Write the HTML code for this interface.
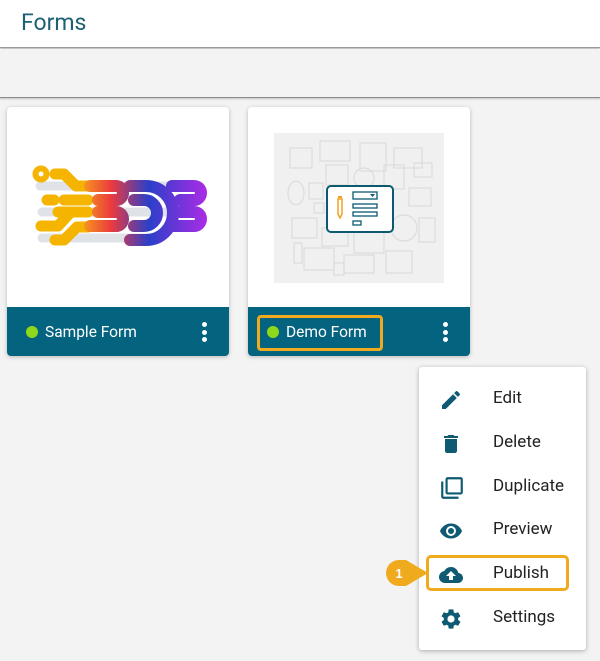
<!DOCTYPE html>
<html><head><meta charset="utf-8"><style>
*{margin:0;padding:0;box-sizing:border-box}
body{width:600px;height:661px;background:#f3f3f3;font-family:Roboto,"Liberation Sans",sans-serif;position:relative;overflow:hidden}
.hdr{position:absolute;left:0;top:0;width:600px;height:48px;background:#fff;border-bottom:1px solid #9a9a9a;box-shadow:0 1px 2px rgba(0,0,0,.25)}
.hdr span{position:absolute;left:21px;top:9px;font-size:23px;color:#1d5f73}
.band{position:absolute;left:0;top:49px;width:600px;height:49px;background:#f3f3f3;border-bottom:1px solid #8a8a8a;box-shadow:0 1px 2px rgba(0,0,0,.2)}
.card{position:absolute;top:107px;width:222px;height:249px;background:#fff;border-radius:4px;box-shadow:0 1px 4px rgba(0,0,0,.25);overflow:hidden}
.foot{position:absolute;left:0;bottom:0;width:100%;height:49px;background:#04637f;color:#fff;font-size:15.5px}
.dot{position:absolute;left:19px;top:19px;width:12px;height:12px;border-radius:50%;background:#8ed81c}
.lbl{position:absolute;left:38px;top:16px}
.kb{position:absolute;right:22px;top:15px;width:5px}
.kb i{display:block;width:5px;height:5px;border-radius:50%;background:#fff;margin-bottom:2.5px}
.menu{position:absolute;left:419px;top:367px;width:167px;height:283px;background:#fff;border-radius:3px;box-shadow:0 1px 5px rgba(0,0,0,.3)}
.it{position:absolute;left:74px;font-size:17px;color:#222}
.ic{position:absolute;left:20px}
</style></head><body>
<div class="hdr"><span>Forms</span></div>
<div class="band"></div>

<div class="card" style="left:7px">
<svg style="position:absolute;left:0;top:0" width="222" height="200" viewBox="7 107 222 200">
<defs><linearGradient id="g" x1="80" y1="0" x2="205" y2="0" gradientUnits="userSpaceOnUse">
<stop offset="0" stop-color="#f7a21a"/><stop offset=".25" stop-color="#ec3a3f"/><stop offset=".55" stop-color="#2b3fc9"/><stop offset="1" stop-color="#a72ce6"/></linearGradient></defs>
<g stroke="#dfe3e8" stroke-width="9" stroke-linecap="round">
<line x1="40" y1="186" x2="200" y2="186"/><line x1="42" y1="212" x2="200" y2="212"/><line x1="42" y1="238" x2="150" y2="238"/></g>
<g stroke="#f5b400" stroke-width="11" stroke-linecap="round" stroke-linejoin="round" fill="none">
<circle cx="41" cy="174" r="3"/><path d="M55 174 H64 L76 186 H88"/><path d="M47 200 H54"/><path d="M64 200 H88"/>
<path d="M58 212 H88"/><path d="M41 226 H58 L70 213"/><path d="M55 240 H64 L77 227 H88"/></g>
<g stroke="url(#g)" stroke-width="12" stroke-linecap="round" fill="none">
<path d="M90 186 H116 a7 7 0 0 1 0 14 H98"/><path d="M98 212 H116 a7 7 0 0 1 0 14 H90"/>
<path d="M130 186 H146 a27 27 0 0 1 0 54 H130"/><path d="M134 200 H144 a13 13 0 0 1 0 26 H134"/>
<path d="M172 186 H194 a7 7 0 0 1 0 14 H180"/><path d="M180 212 H194 a7 7 0 0 1 0 14 H172"/></g>
</svg>
<div class="foot"><div class="dot"></div><div class="lbl">Sample Form</div><div class="kb"><i></i><i></i><i></i></div></div>
</div>

<div class="card" style="left:248px">
<svg style="position:absolute;left:26px;top:26px" width="170" height="150" viewBox="0 0 170 150">
<rect width="170" height="150" fill="#f0f0f0"/>
<g fill="none" stroke="#dcdcdc" stroke-width="1.2">
<rect x="16" y="15" width="22" height="20"/><rect x="46" y="8" width="30" height="20"/><rect x="86" y="10" width="26" height="28"/><rect x="120" y="15" width="28" height="20"/>
<circle cx="90" cy="45" r="10"/><rect x="52" y="32" width="22" height="20"/><rect x="110" y="32" width="20" height="24"/><ellipse cx="22" cy="60" rx="8" ry="12"/>
<rect x="35" y="50" width="14" height="16"/><rect x="135" y="55" width="22" height="18"/><rect x="18" y="85" width="25" height="20"/><circle cx="130" cy="95" r="13"/>
<rect x="48" y="95" width="26" height="18"/><rect x="80" y="98" width="30" height="22"/><rect x="30" y="115" width="30" height="22"/><rect x="70" y="122" width="30" height="18"/><rect x="112" y="118" width="26" height="22"/><rect x="145" y="85" width="16" height="24"/>
<rect x="40" y="70" width="10" height="10"/><rect x="140" y="30" width="18" height="14"/><rect x="20" y="110" width="8" height="20"/><rect x="100" y="70" width="8" height="12"/><rect x="60" y="130" width="10" height="12"/></g>
<rect x="53" y="53" width="66" height="46" rx="4" fill="#fff" stroke="#0c5a70" stroke-width="2"/>
<rect x="79" y="59" width="24" height="7" fill="none" stroke="#0c5a70" stroke-width="1.3"/><path d="M96 61 h5 l-2.5 3z" fill="#0c5a70"/>
<rect x="79" y="71" width="24" height="4" fill="none" stroke="#0c5a70" stroke-width="1.3"/><rect x="79" y="79" width="24" height="4" fill="none" stroke="#0c5a70" stroke-width="1.3"/>
<rect x="79" y="88" width="8" height="4" fill="none" stroke="#0c5a70" stroke-width="1.3"/>
<path d="M64 66 h4 v15 l-2 4 -2 -4z" fill="none" stroke="#f0a020" stroke-width="1.5"/><rect x="64" y="63" width="4" height="2" fill="#f0a020"/>
</svg>
<div class="foot"><div class="dot"></div><div class="lbl">Demo Form</div><div class="kb"><i></i><i></i><i></i></div>
<div style="position:absolute;left:9px;top:8px;width:126px;height:36px;border:3px solid #f0aa1e;border-radius:4px"></div></div>
</div>

<div class="menu">
<svg class="ic" style="top:21px" width="24" height="24" viewBox="0 0 24 24"><path fill="#0e5a72" d="M3 17.25V21h3.75L17.81 9.94l-3.75-3.75L3 17.25zM20.710 7.04a1 1 0 0 0 0-1.41l-2.34-2.34a1 1 0 0 0-1.41 0l-1.83 1.83 3.75 3.75 1.83-1.83z"/></svg>
<div class="it" style="top:21px">Edit</div>
<svg class="ic" style="top:65px" width="24" height="24" viewBox="0 0 24 24"><path fill="#0e5a72" d="M6 19c0 1.1.9 2 2 2h8c1.1 0 2-.9 2-2V7H6v12zM19 4h-3.5l-1-1h-5l-1 1H5v2h14V4z"/></svg>
<div class="it" style="top:65px">Delete</div>
<svg class="ic" style="top:108px" width="26" height="26" viewBox="0 0 24 24"><path fill="#0e5a72" d="M4 6H2v14c0 1.1.9 2 2 2h14v-2H4V6zm16-4H8c-1.1 0-2 .9-2 2v12c0 1.1.9 2 2 2h12c1.1 0 2-.9 2-2V4c0-1.1-.9-2-2-2zm0 14H8V4h12v12z"/></svg>
<div class="it" style="top:109px">Duplicate</div>
<svg class="ic" style="top:152px" width="24" height="24" viewBox="0 0 24 24"><path fill="#0e5a72" d="M12 4.5C7 4.5 2.730 7.61 1 12c1.73 4.39 6 7.5 11 7.5s9.27-3.11 11-7.5c-1.73-4.39-6-7.5-11-7.5zM12 17a5 5 0 1 1 0-10 5 5 0 0 1 0 10zm0-8a3 3 0 1 0 0 6 3 3 0 0 0 0-6z"/></svg>
<div class="it" style="top:152px">Preview</div>
<svg class="ic" style="top:196px" width="24" height="24" viewBox="0 0 24 24"><path fill="#0e5a72" d="M19.35 10.04A7.49 7.49 0 0 0 12 4C9.11 4 6.6 5.64 5.35 8.04A5.994 5.994 0 0 0 0 14c0 3.31 2.69 6 6 6h13c2.76 0 5-2.24 5-5 0-2.64-2.05-4.78-4.65-4.96zM14 13v4h-4v-4H7l5-5 5 5h-3z"/></svg>
<div class="it" style="top:196px">Publish</div>
<svg class="ic" style="top:240px" width="24" height="24" viewBox="0 0 24 24"><path fill="#0e5a72" d="M19.14 12.94c.04-.3.06-.61.06-.94 0-.32-.02-.64-.07-.94l2.03-1.58a.49.49 0 0 0 .12-.61l-1.92-3.32a.488.488 0 0 0-.59-.22l-2.39.96c-.5-.38-1.03-.7-1.620-.94l-.36-2.54a.484.484 0 0 0-.48-.41h-3.84c-.24 0-.43.17-.47.41l-.36 2.54c-.59.24-1.13.57-1.62.94l-2.39-.96c-.22-.08-.47 0-.59.22L2.74 8.87c-.12.21-.8.47.12.61l2.03 1.58c-.05.3-.09.63-.09.94s.02.64.07.94l-2.03 1.58a.49.49 0 0 0-.12.61l1.92 3.32c.12.22.37.29.59.22l2.39-.96c.5.38 1.03.7 1.62.94l.36 2.54c.05.24.24.41.48.41h3.84c.24 0 .44-.17.47-.41l.36-2.54c.59-.24 1.13-.56 1.62-.94l2.39.96c.22.08.47 0 .59-.22l1.92-3.32c.12-.22.07-.47-.12-.61l-2.01-1.58zM12 15.6A3.6 3.6 0 1 1 12 8.4a3.6 3.6 0 0 1 0 7.2z"/></svg>
<div class="it" style="top:240px">Settings</div>
<div style="position:absolute;left:7px;top:188px;width:143px;height:36px;border:3px solid #f0aa1e;border-radius:5px"></div>
</div>
<svg style="position:absolute;left:384px;top:558px" width="46" height="30" viewBox="0 0 46 30"><path d="M15 2 H22 L44 15 L22 28 H15 A13 13 0 0 1 15 2z" fill="#f0aa1e"/><text x="15" y="20" font-family="Liberation Sans,sans-serif" font-size="13" font-weight="bold" fill="#fff" text-anchor="middle">1</text></svg>
</body></html>
